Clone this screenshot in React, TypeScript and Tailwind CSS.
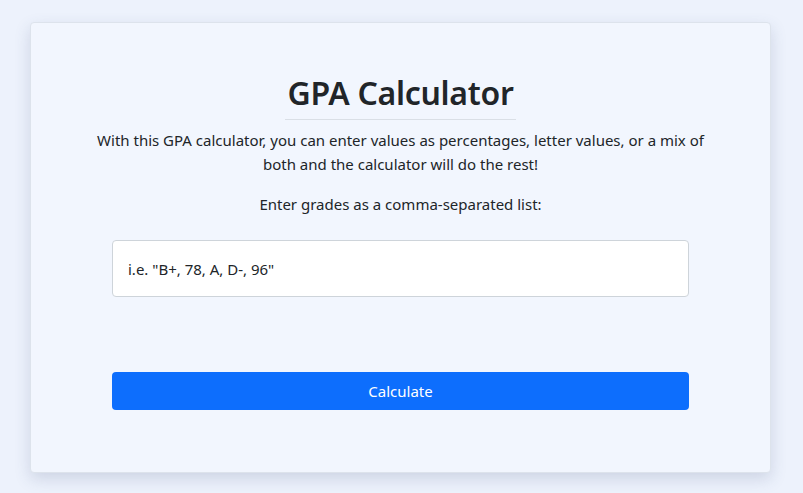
import React, { useState } from 'react';

const App: React.FC = () => {
  const [grades, setGrades] = useState('');

  return (
    <div
      className="min-h-screen w-full bg-[#edf2fc] pt-[22px] pb-[20px] text-[#212529]"
      style={{ fontFamily: '"Noto Sans", "Open Sans", sans-serif' }}
    >
      <div className="ml-[30px] w-[741px] h-[451px] rounded-[4px] border border-[#dde3ec] bg-[#f2f6fe] shadow-[0_6px_16px_rgba(60,80,120,0.18)] flex flex-col items-center pt-[50px]">
        {/* Title */}
        <h1 className="text-[32px] font-semibold leading-[40px] pb-[6px] border-b border-[#dadfe6] px-[2px] tracking-[-0.3px]">
          GPA Calculator
        </h1>

        <p className="mt-[8px] w-[630px] text-center text-[15px] leading-[24px]">
          With this GPA calculator, you can enter values as percentages, letter values, or a mix of both
          and the calculator will do the rest!
        </p>

        <p className="mt-[16px] text-center text-[15px] leading-[24px]">
          Enter grades as a comma-separated list:
        </p>

        <input
          type="text"
          value={grades}
          onChange={(e) => setGrades(e.target.value)}
          placeholder={'i.e. "B+, 78, A, D-, 96"'}
          className="mt-[24px] w-[577px] h-[57px] rounded-[4px] border border-[#ced4da] bg-white px-[15px] text-[15px] text-[#212529] placeholder:text-[#212529] outline-none"
        />

        <button
          type="button"
          className="mt-[75px] w-[577px] h-[38px] rounded-[4px] bg-[#0d6efd] text-white text-[15px]"
        >
          Calculate
        </button>
      </div>
    </div>
  );
};

export default App;
